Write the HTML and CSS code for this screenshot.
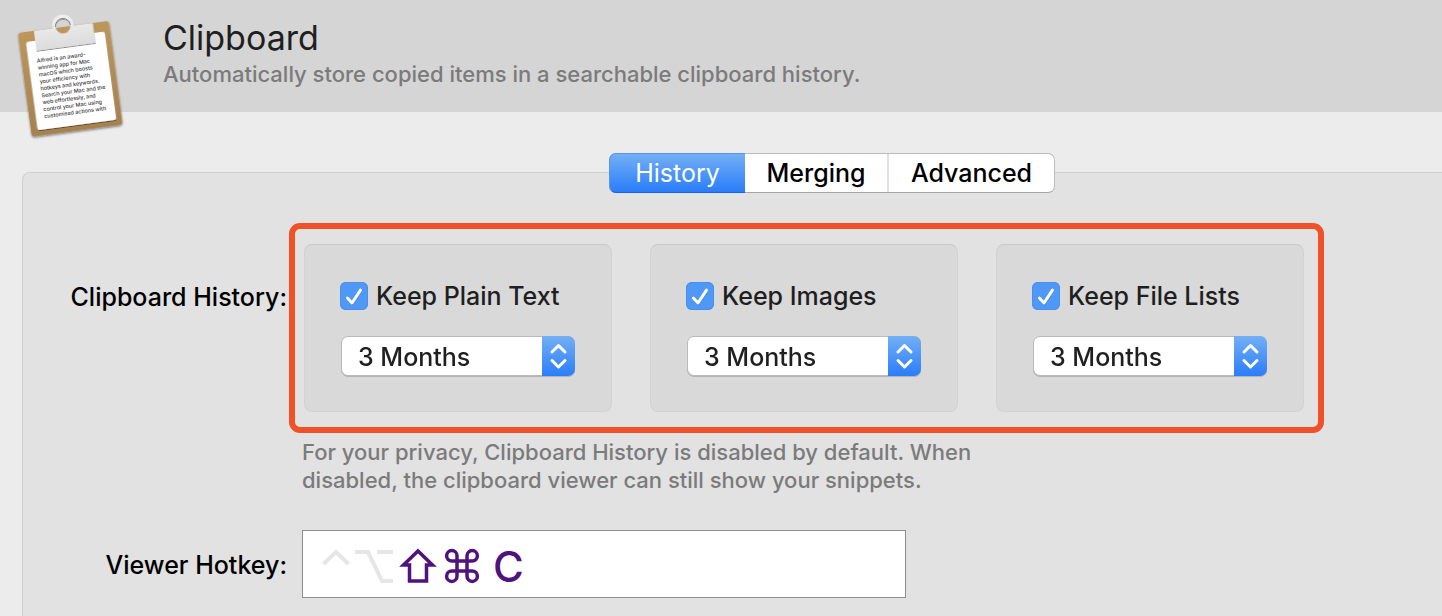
FILE: index.html
```html
<!DOCTYPE html>
<html lang="en">
<head>
<meta charset="utf-8">
<title>Clipboard</title>
<link rel="stylesheet" href="styles.css">
</head>
<body>
<svg class="defs" aria-hidden="true">
  <symbol id="tick" viewBox="0 0 28 28"><path d="M7.5 16.2 12 21 20.5 8.2" transform="translate(0 .8)" stroke="#2c6fc4" stroke-opacity=".6"/><path d="M7.5 16.2 12 21 20.5 8.2" stroke="#fff"/></symbol>
  <symbol id="stepper" viewBox="0 0 33 40"><path d="M10 16 16.500 9.500 23 16M10 24.500 16.500 31 23 24.500"/></symbol>
</svg>
<header class="header">
  <svg class="board" viewBox="0 0 140 145" aria-hidden="true">
    <defs>
      <linearGradient id="wood" x1="0" y1="0" x2="0" y2="1"><stop offset="0" stop-color="#bc965c"/><stop offset="1" stop-color="#a58150"/></linearGradient>
      <linearGradient id="metal" x1="0" y1="0" x2="0" y2="1"><stop offset="0" stop-color="#f0f0f0"/><stop offset="1" stop-color="#dcdcdc"/></linearGradient>
      <filter id="soft" x="-20%" y="-20%" width="140%" height="140%"><feDropShadow dx="0" dy="1.200" stdDeviation="1.200" flood-opacity=".55"/></filter>
      <filter id="thin" x="-20%" y="-20%" width="140%" height="140%"><feDropShadow dx="0" dy=".8" stdDeviation=".6" flood-opacity=".6"/></filter>
    </defs>
    <g transform="translate(18 33) rotate(-7.6)">
      <rect width="91.500" height="104.500" rx="3" fill="url(#wood)" filter="url(#soft)"/>
      <rect x="6.600" y="10" width="79.500" height="89" rx="2.500" fill="#fff" filter="url(#thin)"/>
      <path fill="url(#metal)" fill-rule="evenodd" filter="url(#thin)" d="M17 0H34.600A11 11 0 1 1 56.400 0H74.500Q75.500 0 75.500 1V20H16V1Q16 0 17 0ZM38 -1a7.500 7.500 0 1 0 15 0a7.500 7.500 0 1 0 -15 0Z"/>
      <path d="M38 -1a7.500 7.500 0 0 1 15 0" fill="none" stroke="#777" stroke-width=".8"/>
      <g class="note" font-size="5.4">
        <text x="15" y="32">Alfred is an award-</text>
        <text x="15" y="39">winning app for Mac</text>
        <text x="15" y="46">macOS which boosts</text>
        <text x="15" y="53">your efficiency with</text>
        <text x="15" y="60">hotkeys and keywords.</text>
        <text x="15" y="67">Search your Mac and the</text>
        <text x="15" y="74">web effortlessly, and</text>
        <text x="15" y="81">control your Mac using</text>
        <text x="15" y="88">customised actions with</text>
      </g>
    </g>
  </svg>
  <div class="heading">
    <h1 class="title">Clipboard</h1>
    <p class="subtitle">Automatically store copied items in a searchable clipboard history.</p>
  </div>
</header>
<main class="content">
  <section class="panel">
    <div class="tabs" role="tablist">
      <button class="tab tab-active" role="tab" aria-selected="true">History</button>
      <button class="tab" role="tab" aria-selected="false">Merging</button>
      <button class="tab" role="tab" aria-selected="false">Advanced</button>
    </div>
    <form class="form">
      <span class="label">Clipboard History:</span>
      <div class="highlight">
        <div class="card">
          <label class="check"><span class="box"><input type="checkbox" checked><svg><use href="#tick"/></svg></span>Keep Plain Text</label>
          <div class="drop"><select aria-label="Keep plain text for"><option>3 Months</option></select><svg><use href="#stepper"/></svg></div>
        </div>
        <div class="card">
          <label class="check"><span class="box"><input type="checkbox" checked><svg><use href="#tick"/></svg></span>Keep Images</label>
          <div class="drop"><select aria-label="Keep images for"><option>3 Months</option></select><svg><use href="#stepper"/></svg></div>
        </div>
        <div class="card">
          <label class="check"><span class="box"><input type="checkbox" checked><svg><use href="#tick"/></svg></span>Keep File Lists</label>
          <div class="drop"><select aria-label="Keep file lists for"><option>3 Months</option></select><svg><use href="#stepper"/></svg></div>
        </div>
      </div>
      <p class="hint">For your privacy, Clipboard History is disabled by default. When disabled, the clipboard viewer can still show your snippets.</p>
      <label class="label" for="hotkey">Viewer Hotkey:</label>
      <div class="hotkey">
        <svg class="keys" viewBox="0 0 180 66" fill="none" stroke-width="4" aria-hidden="true">
          <path stroke="#e6e6e6" d="M20.500 33 33 21 45.500 33"/>
          <path stroke="#e6e6e6" d="M52 21H65L79 50H90M74 21H90"/>
          <path stroke="#50127b" stroke-width="3.500" d="M115 20 129.500 34H123.500V50H106.500V34H100.500Z"/>
          <path stroke="#50127b" stroke-width="3.500" d="M154 24.800a5.200 5.200 0 1 0 -5.200 5.200H169.200a5.200 5.200 0 1 0 -5.200 -5.200V45.200a5.200 5.200 0 1 0 5.200 -5.200H148.800a5.200 5.200 0 1 0 5.200 5.200Z"/>
        </svg>
        <input id="hotkey" type="text" value="C">
      </div>
    </form>
  </section>
</main>
</body>
</html>
```
FILE: styles.css
```css
* { box-sizing: border-box; }
body {
  margin: 0;
  min-height: 100vh;
  display: flex;
  flex-direction: column;
  overflow-x: hidden;
  background: #ececec;
  color: #000;
  font-family: Inter, "Liberation Sans", sans-serif;
  font-size: 25px;
  font-weight: 450;
  line-height: 32px;
}
.defs { display: none; }
.header {
  position: relative;
  height: 112px;
  padding: 16px 20px 0 163px;
  background: #d5d5d5;
}
.board {
  position: absolute;
  left: 0;
  top: 0;
  width: 140px;
  height: 145px;
}
.note { font-weight: 450; fill: #333; }
.title {
  margin: 0;
  font-size: 34px;
  line-height: 44px;
  font-weight: 400;
  color: #1f1f1f;
}
.subtitle {
  margin: 0;
  font-size: 22px;
  line-height: 28px;
  color: #7b7b7b;
}
.content {
  flex: 1;
  display: flex;
  padding: 60px 0 0 22px;
}
.panel {
  flex: 1;
  border: 1px solid #d0d0d0;
  border-width: 1px 0 0 1px;
  border-radius: 8px 0 0 0;
  background: #e2e2e2;
}
.tabs {
  display: flex;
  width: 446px;
  height: 40px;
  margin: -20px 0 0 586px;
  border: 1px solid #bdbdbd;
  border-bottom-color: #a5a5a5;
  border-radius: 7px;
  background: #fff;
}
.tab {
  flex: 0 0 144px;
  padding: 0;
  border: 0;
  border-right: 2px solid #e0e0e0;
  background: none;
  font: inherit;
  color: #000;
}
.tab:last-child { flex: 1; border: 0; }
.tab-active {
  flex-basis: 136px;
  margin: -1px 0 -1px -1px;
  border: 1px solid #5695ee;
  border-bottom-color: #1c64ee;
  border-right: 0;
  border-radius: 7px 0 0 7px;
  background: linear-gradient(#73aff4, #2a7dfa);
  font-weight: 400;
  color: #fff;
}
.form {
  display: grid;
  grid-template-columns: 264px minmax(0, 1035px);
  column-gap: 2px;
  margin-top: 30px;
}
.label { text-align: right; }
.form > span.label { padding-top: 58px; }
.highlight {
  display: grid;
  grid-template-columns: repeat(3, 1fr);
  gap: 38px;
  padding: 15px 14px 15px 9px;
  border: 6px solid #f15128;
  border-radius: 11px;
}
.card {
  height: 168px;
  padding: 37px 36px 0 36px;
  border: 1px solid #d2d2d2;
  border-top-color: #c8c8c8;
  border-radius: 8px;
  background: #d9d9d9;
  color: #1f1f1f;
}
.check {
  display: flex;
  align-items: center;
  gap: 8px;
  margin-left: -1px;
  height: 28px;
  line-height: 34px;
  white-space: nowrap;
}
.box, .drop { display: grid; }
.box > *, .drop > * { grid-area: 1 / 1; }
.box input {
  appearance: none;
  width: 28px;
  height: 28px;
  margin: 0;
  border-radius: 6px;
  background: #4f98f6;
  box-shadow: inset 0 0 0 1px #468ff0;
}
.box svg {
  width: 28px;
  height: 28px;
  fill: none;
  stroke-width: 3;
  stroke-linecap: round;
  stroke-linejoin: round;
  pointer-events: none;
}
.drop {
  height: 40px;
  margin-top: 26px;
  filter: drop-shadow(0 1px 0 #b4b4b4);
}
.drop select {
  appearance: none;
  height: 40px;
  padding: 2px 40px 0 16px;
  border: 1px solid #b9b9b9;
  border-radius: 7px;
  background: #fff;
  font: inherit;
  color: #1f1f1f;
}
.drop svg {
  justify-self: end;
  width: 33px;
  height: 40px;
  border-radius: 0 7px 7px 0;
  background: linear-gradient(#73aff4, #2a7dfa);
  fill: none;
  stroke: #fff;
  stroke-width: 3;
  stroke-linecap: round;
  stroke-linejoin: round;
  pointer-events: none;
}
.hint {
  grid-column: 2;
  max-width: 700px;
  margin: 5px 0 0 13px;
  font-size: 22px;
  line-height: 28px;
  color: #7b7b7b;
}
.form > label.label { margin-top: 36px; padding-top: 19px; }
.hotkey {
  display: flex;
  max-width: 604px;
  height: 68px;
  margin: 36px 0 0 13px;
  border: 1px solid #8e8e8e;
  background: #fff;
}
.keys { flex: none; width: 180px; height: 66px; }
.hotkey input {
  flex: 1;
  min-width: 0;
  padding: 4px 0 0 10px;
  border: 0;
  outline: 0;
  background: none;
  font: inherit;
  font-size: 42px;
  color: #50127b;
}
```
